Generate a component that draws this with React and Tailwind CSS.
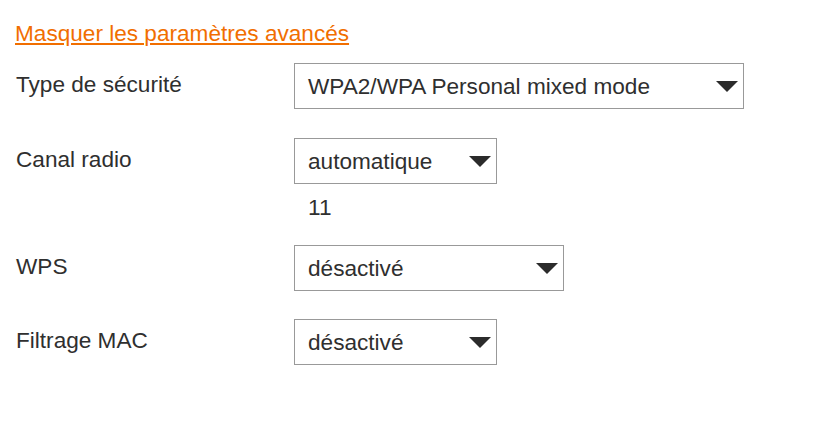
import React from "react";

function Arrow() {
  return (
    <svg width="22" height="11" viewBox="0 0 22 11" className="shrink-0">
      <polygon points="0,0 22,0 11,11" fill="#2b2b2b" />
    </svg>
  );
}

function Select({ value, width }) {
  return (
    <div
      className={`h-[46px] border border-[#999999] bg-white flex items-center justify-between pl-[13px] pr-[5px] ${width}`}
    >
      <span className="leading-[25px]">{value}</span>
      <Arrow />
    </div>
  );
}

function Row({ label, children, className = "" }) {
  return (
    <div className={`flex items-start ${className}`}>
      <div className="w-[278px] pt-[9px] leading-[25px]">{label}</div>
      <div className="flex flex-col">{children}</div>
    </div>
  );
}

export default function App() {
  return (
    <div
      className="w-[823px] h-[430px] bg-white text-[22.6px] text-[#2f2f2f] pl-4 pt-[21px]"
      style={{ fontFamily: '"Liberation Sans", Arial, sans-serif' }}
    >
      <a
        href="#"
        className="block w-fit -ml-px leading-[25px] text-[#f16e00] underline decoration-[#f16e00]"
      >
        Masquer les paramètres avancés
      </a>
      <Row label="Type de sécurité" className="mt-[17px]">
        <Select value="WPA2/WPA Personal mixed mode" width="w-[450px]" />
      </Row>
      <Row label="Canal radio" className="mt-[29px]">
        <Select value="automatique" width="w-[203px]" />
        <div className="pl-[14px] mt-[11px] leading-[25px]">11</div>
      </Row>
      <Row label="WPS" className="mt-[25px]">
        <Select value="désactivé" width="w-[270px]" />
      </Row>
      <Row label="Filtrage MAC" className="mt-[28px]">
        <Select value="désactivé" width="w-[203px]" />
      </Row>
    </div>
  );
}
